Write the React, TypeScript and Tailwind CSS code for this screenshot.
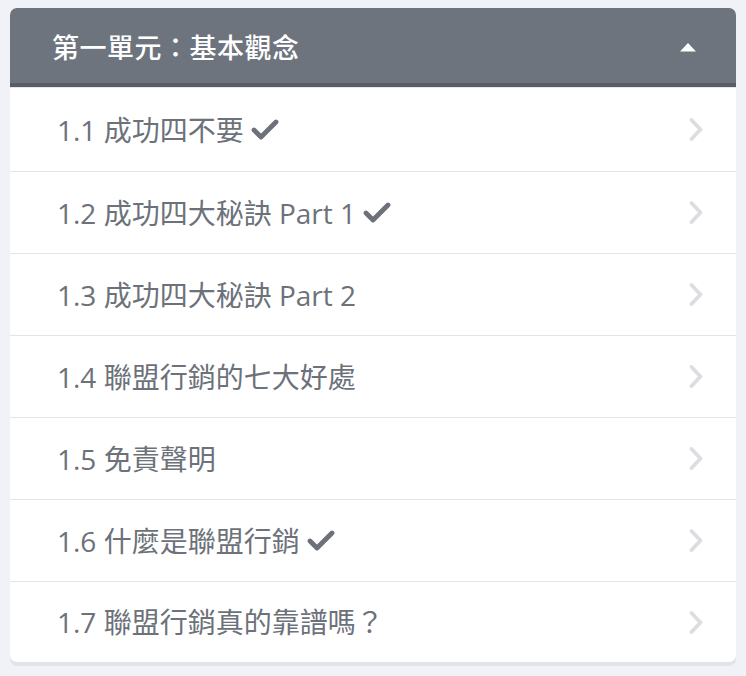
import React from "react";

const items = [
  { t: "1.1 成功四不要", done: true },
  { t: "1.2 成功四大秘訣 Part 1", done: true },
  { t: "1.3 成功四大秘訣 Part 2", done: false },
  { t: "1.4 聯盟行銷的七大好處", done: false },
  { t: "1.5 免責聲明", done: false },
  { t: "1.6 什麼是聯盟行銷", done: true },
  { t: "1.7 聯盟行銷真的靠譜嗎？", done: false },
];

function Check() {
  return (
    <svg width="28" height="21" viewBox="0 0 28 21" className="ml-[7px] shrink-0">
      <polyline points="3,11 10,18 25,3" fill="none" stroke="#6c717a" strokeWidth="4.8" strokeLinecap="round" strokeLinejoin="round" />
    </svg>
  );
}

function Chevron() {
  return (
    <svg width="17" height="25" viewBox="0 0 17 25" className="shrink-0">
      <polyline points="3.5,3 12.5,12.5 3.5,22" fill="none" stroke="#dcdde0" strokeWidth="3.8" strokeLinecap="round" strokeLinejoin="round" />
    </svg>
  );
}

export default function App() {
  return (
    <div
      className="w-[746px] h-[676px] bg-[#f1f2f7] pt-[8px] px-[10px]"
      style={{ fontFamily: '"Open Sans", "Noto Sans CJK TC", sans-serif' }}
    >
      <div className="w-[726px] rounded-[7px] bg-white shadow-[0_4px_0_#e3e4e8] overflow-hidden">
        <div className="h-[79px] bg-[#6e747e] border-b-[4px] border-[#595d65] flex items-center justify-between pl-[42px] pr-[39px] pt-[3px]">
          <span className="text-white text-[27px] font-medium tracking-[0.5px]" style={{ fontFamily: '"Noto Sans CJK TC", sans-serif' }}>
            第一單元：基本觀念
          </span>
          <svg width="18" height="10" viewBox="0 0 18 10">
            <polygon points="1,9.5 9,1 17,9.5" fill="#ffffff" />
          </svg>
        </div>
        <div className="border-t border-[#e6e7ea]">
          {items.map((it, i) => (
            <div
              key={i}
              className={`flex items-center justify-between pl-[47px] pr-[31px] ${i === 0 ? "h-[84px]" : i === items.length - 1 ? "h-[80px]" : "h-[82px]"} ${i < items.length - 1 ? "border-b border-[#e3e4e7]" : ""}`}
            >
              <div className="flex items-center text-[28px] text-[#6c717a] leading-none">
                <span>{it.t}</span>
                {it.done && <Check />}
              </div>
              <Chevron />
            </div>
          ))}
        </div>
      </div>
    </div>
  );
}
